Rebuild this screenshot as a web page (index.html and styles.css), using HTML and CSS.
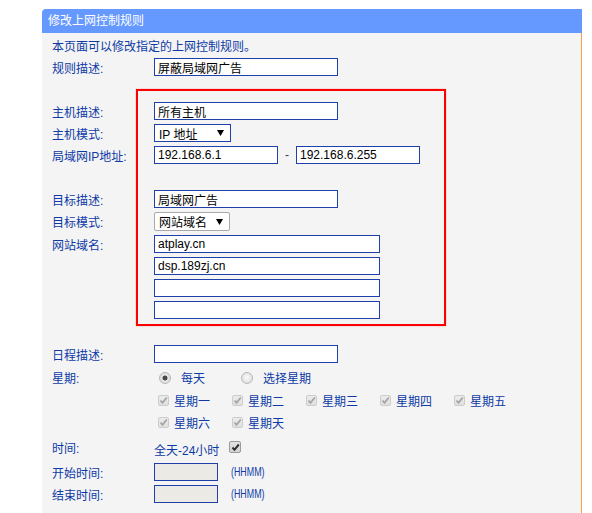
FILE: index.html
```html
<!DOCTYPE html>
<html lang="zh-CN">
<head>
<meta charset="utf-8">
<title>修改上网控制规则</title>
<link rel="stylesheet" href="styles.css">
</head>
<body>
<div class="panel">
  <div class="panel-head">修改上网控制规则</div>
  <div class="panel-body">
    <div class="row">本页面可以修改指定的上网控制规则。</div>
    <div class="row"><span class="label">规则描述:</span><input class="field w184" type="text" value="屏蔽局域网广告"></div>
    <div class="row"></div>
    <div class="row"><span class="label">主机描述:</span><input class="field w184" type="text" value="所有主机"></div>
    <div class="row"><span class="label">主机模式:</span>
      <div class="select sel-blue"><span>IP 地址</span><svg class="arrow" width="7" height="6" viewBox="0 0 7 6"><path d="M0 0H7L3.5 6Z"/></svg></div>
    </div>
    <div class="row"><span class="label">局域网IP地址:</span><input class="field w124" type="text" value="192.168.6.1"><span class="dash">-</span><input class="field w124" type="text" value="192.168.6.255"></div>
    <div class="row"></div>
    <div class="row"><span class="label">目标描述:</span><input class="field w184" type="text" value="局域网广告"></div>
    <div class="row row-sel"><span class="label">目标模式:</span>
      <div class="select sel-grey"><span>网站域名</span><svg class="arrow" width="7" height="6" viewBox="0 0 7 6"><path d="M0 0H7L3.5 6Z"/></svg></div>
    </div>
    <div class="row"><span class="label">网站域名:</span><input class="field w226" type="text" value="atplay.cn"></div>
    <div class="row"><span class="label"></span><input class="field w226" type="text" value="dsp.189zj.cn"></div>
    <div class="row"><span class="label"></span><input class="field w226" type="text" value=""></div>
    <div class="row"><span class="label"></span><input class="field w226" type="text" value=""></div>
    <div class="row"></div>
    <div class="row"><span class="label">日程描述:</span><input class="field w184" type="text" value=""></div>
    <div class="row row-radio"><span class="label">星期:</span>
      <div class="radios">
        <span class="radio-item"><span class="radio on"></span><span>每天</span></span>
        <span class="radio-item"><span class="radio"></span><span>选择星期</span></span>
      </div>
    </div>
    <div class="row row-cb"><span class="label"></span>
      <span class="day"><span class="cb"><svg width="9" height="9" viewBox="0 0 9 9"><path d="M1.5 4.5L3.5 6.8L7.8 1.5"/></svg></span>星期一</span>
      <span class="day"><span class="cb"><svg width="9" height="9" viewBox="0 0 9 9"><path d="M1.5 4.5L3.5 6.8L7.8 1.5"/></svg></span>星期二</span>
      <span class="day"><span class="cb"><svg width="9" height="9" viewBox="0 0 9 9"><path d="M1.5 4.5L3.5 6.8L7.8 1.5"/></svg></span>星期三</span>
      <span class="day"><span class="cb"><svg width="9" height="9" viewBox="0 0 9 9"><path d="M1.5 4.5L3.5 6.8L7.8 1.5"/></svg></span>星期四</span>
      <span class="day"><span class="cb"><svg width="9" height="9" viewBox="0 0 9 9"><path d="M1.5 4.5L3.5 6.8L7.8 1.5"/></svg></span>星期五</span>
    </div>
    <div class="row row-cb2"><span class="label"></span>
      <span class="day"><span class="cb"><svg width="9" height="9" viewBox="0 0 9 9"><path d="M1.5 4.5L3.5 6.8L7.8 1.5"/></svg></span>星期六</span>
      <span class="day"><span class="cb"><svg width="9" height="9" viewBox="0 0 9 9"><path d="M1.5 4.5L3.5 6.8L7.8 1.5"/></svg></span>星期天</span>
    </div>
    <div class="row row-time"><span class="label">时间:</span>
      <span class="allday">全天-24小时</span>
      <span class="cb cb-on"><svg width="9" height="9" viewBox="0 0 9 9"><path d="M1.5 4.5L3.5 6.8L7.8 1.5"/></svg></span>
    </div>
    <div class="row"><span class="label">开始时间:</span><input class="field w64 off" type="text" value="" disabled><span class="hint">(HHMM)</span></div>
    <div class="row"><span class="label">结束时间:</span><input class="field w64 off" type="text" value="" disabled><span class="hint">(HHMM)</span></div>
  </div>
  <div class="annot"></div>
</div>
</body>
</html>
```

FILE: styles.css
```css
html, body {
  margin: 0;
  padding: 0;
  background: #ffffff;
}

body {
  font-family: "Liberation Sans", "Noto Sans CJK SC", sans-serif;
  font-size: 12px;
  color: #0d3aa6;
  overflow: hidden;
}

.panel {
  position: relative;
  margin: 9px 0 0 42px;
  width: 540px;
}

.panel-head {
  height: 24px;
  line-height: 24px;
  background: #6699ff;
  color: #ffffff;
  padding-left: 6px;
  border-top-left-radius: 4px;
}

.panel-body {
  width: 529px;
  background: #f4f4f4;
  border-right: 1px solid #f4a04e;
  padding: 1px 0 30px 10px;
}

.row {
  display: flex;
  align-items: center;
  height: 22px;
  white-space: nowrap;
}

.row-sel { height: 23px; }
.row-radio { height: 25px; }
.row-cb { height: 21px; }
.row-cb2 { height: 22px; }
.row-time { height: 28px; }

.label {
  flex: 0 0 102px;
  width: 102px;
}

.field {
  box-sizing: border-box;
  height: 18px;
  margin: 0;
  padding: 0 3px;
  border: 1px solid #1e40a8;
  background: #ffffff;
  color: #000000;
  font-family: "Liberation Sans", "Noto Sans CJK SC", sans-serif;
  font-size: 12px;
  outline: none;
}

.field.off {
  background: #ebeae4;
}

.w184 { width: 184px; }
.w124 { width: 124px; }
.w226 { width: 226px; }
.w64 { width: 64px; }

.dash {
  width: 18px;
  text-align: center;
  color: #333a55;
}

.select {
  box-sizing: border-box;
  display: flex;
  align-items: center;
  justify-content: space-between;
  background: #ffffff;
  color: #000000;
  padding: 0 6px 0 4px;
}

.sel-blue {
  width: 77px;
  height: 18px;
  border: 1px solid #1e40a8;
}

.sel-grey {
  width: 76px;
  height: 19px;
  border: 1px solid #a9a9a9;
  border-radius: 2px;
  padding-right: 6px;
}

.arrow path { fill: #000000; }

.radios {
  display: flex;
  padding-left: 5px;
}

.radio-item {
  display: flex;
  align-items: center;
  gap: 10px;
  width: 82px;
}

.radio {
  box-sizing: border-box;
  width: 12px;
  height: 12px;
  border-radius: 50%;
  border: 1px solid #b8b8b8;
  background: radial-gradient(circle at 50% 45%, #fbfbfb 0, #e2e2e2 70%, #d4d4d4 100%);
}

.radio.on {
  background: radial-gradient(circle, #4a4a4a 0, #4a4a4a 2.2px, #e6e6e6 2.8px, #d6d6d6 100%);
}

.day {
  display: flex;
  align-items: center;
  gap: 5px;
  width: 74px;
  padding-left: 4px;
  box-sizing: border-box;
}

.cb {
  box-sizing: border-box;
  width: 11px;
  height: 11px;
  display: inline-flex;
  align-items: center;
  justify-content: center;
  border: 1px solid #cdcdcd;
  border-radius: 2px;
  background: linear-gradient(#ececec, #e0e0e0);
}

.cb svg path {
  fill: none;
  stroke: #a5a5a5;
  stroke-width: 1.8;
}

.cb-on {
  width: 12px;
  height: 12px;
  margin-left: 10px;
  border-color: #9b9b9b;
  background: linear-gradient(#e4e4e4, #d2d2d2);
}

.cb-on svg path {
  stroke: #2e2e2e;
  stroke-width: 2;
}

.allday {
  padding-top: 5px;
}

.hint {
  margin-left: 13px;
  font-size: 12px;
  transform: scaleX(0.74);
  transform-origin: left center;
}

.annot {
  position: absolute;
  left: 94px;
  top: 80px;
  width: 310px;
  height: 237px;
  box-sizing: border-box;
  border: 2px solid #ff0000;
  box-shadow: 0 0 1px rgba(255, 0, 0, 0.6);
  pointer-events: none;
}
```
